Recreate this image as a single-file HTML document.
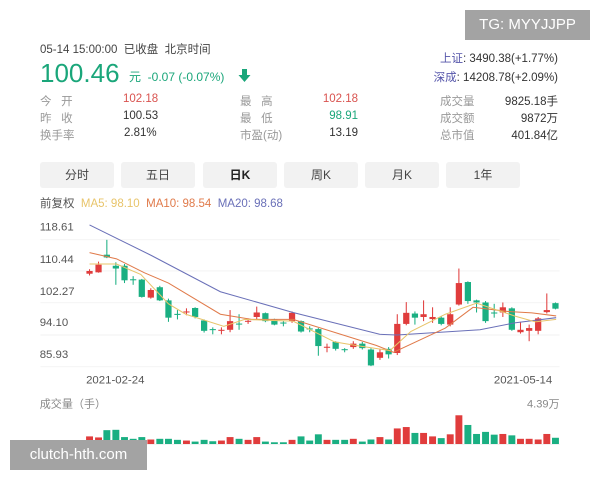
<!DOCTYPE html>
<html><head><meta charset="utf-8"><style>
body{margin:0;width:600px;height:480px;background:#fff;font-family:"Liberation Sans","Noto Sans CJK SC",sans-serif;position:relative;overflow:hidden;color:#333}
.a{position:absolute;white-space:nowrap;font-size:11.5px}
.g{color:#999}.r{color:#d9534f}.gr{color:#1aa67a}
.tab{position:absolute;top:162px;width:74px;height:26px;background:#f2f2f2;border-radius:3px;text-align:center;line-height:26px;font-size:12px;color:#444}
</style></head><body>
<div class="a" style="left:465px;top:10px;width:125px;height:30px;background:#a3a3a3;color:#fff;font-size:15px;line-height:30px;text-align:center">TG: MYYJJPP</div>
<div class="a" style="left:40px;top:41px;font-size:11.5px;color:#444">05-14 15:00:00 &nbsp;已收盘 &nbsp;北京时间</div>
<div class="a gr" style="left:40px;top:58px;font-size:26px">100.46</div>
<div class="a gr" style="left:129px;top:68px;font-size:12px">元 &nbsp;-0.07 (-0.07%)</div>
<svg style="position:absolute;left:238px;top:68px" width="13" height="15"><path d="M4 1h5v6h3.5L6.5 14 0.5 7H4z" fill="#1aa67a"/></svg>
<div class="a g" style="left:40px;top:93px">今 &nbsp; 开</div><div class="a r" style="left:123px;top:93px">102.18</div>
<div class="a g" style="left:40px;top:110px">昨 &nbsp; 收</div><div class="a" style="left:123px;top:110px">100.53</div>
<div class="a g" style="left:40px;top:127px">换手率</div><div class="a" style="left:124px;top:127px">2.81%</div>
<div class="a g" style="left:240px;top:93px">最 &nbsp; 高</div><div class="a r" style="left:300px;top:93px;width:58px;text-align:right">102.18</div>
<div class="a g" style="left:240px;top:110px">最 &nbsp; 低</div><div class="a gr" style="left:300px;top:110px;width:58px;text-align:right">98.91</div>
<div class="a g" style="left:240px;top:127px">市盈(动)</div><div class="a" style="left:300px;top:127px;width:58px;text-align:right">13.19</div>
<div class="a" style="left:400px;top:50px;width:158px;text-align:right"><span style="color:#55a">上证</span>: 3490.38(+1.77%)</div>
<div class="a" style="left:400px;top:69px;width:158px;text-align:right"><span style="color:#55a">深成</span>: 14208.78(+2.09%)</div>
<div class="a g" style="left:440px;top:93px">成交量</div><div class="a" style="left:480px;top:93px;width:78px;text-align:right">9825.18手</div>
<div class="a g" style="left:440px;top:110px">成交额</div><div class="a" style="left:480px;top:110px;width:78px;text-align:right">9872万</div>
<div class="a g" style="left:440px;top:127px">总市值</div><div class="a" style="left:480px;top:127px;width:78px;text-align:right">401.84亿</div>
<div class="tab" style="left:40px">分时</div><div class="tab" style="left:121px">五日</div><div class="tab" style="left:203px;font-weight:bold;color:#222">日K</div><div class="tab" style="left:284px">周K</div><div class="tab" style="left:365px">月K</div><div class="tab" style="left:446px">1年</div>
<div class="a" style="left:40px;top:195px;font-size:11.5px"><span style="color:#555">前复权</span> &nbsp;<span style="color:#e8c46a">MA5: 98.10</span> &nbsp;<span style="color:#e07a4a">MA10: 98.54</span> &nbsp;<span style="color:#6a70b8">MA20: 98.68</span></div>
<svg style="position:absolute;left:30px;top:200px" width="540" height="280" viewBox="0 0 1560 809" preserveAspectRatio="none">
<g stroke="#eee" stroke-width="2"><line x1="30" y1="115" x2="1530" y2="115"/><line x1="30" y1="205" x2="1530" y2="205"/><line x1="30" y1="297" x2="1530" y2="297"/><line x1="30" y1="390" x2="1530" y2="390"/><line x1="30" y1="482" x2="1530" y2="482"/><line x1="30" y1="706" x2="1530" y2="706"/></g>
<g font-size="33" fill="#555" font-family="Liberation Sans,sans-serif"><text x="28" y="88">118.61</text><text x="28" y="182">110.44</text><text x="28" y="274">102.27</text><text x="28" y="364">94.10</text><text x="28" y="456">85.93</text><text x="162" y="530">2021-02-24</text><text x="1340" y="530">2021-05-14</text></g>
<text x="28" y="600" font-size="32" fill="#888" font-family="Liberation Sans,Noto Sans CJK SC,sans-serif">成交量（手）</text>
<text x="1530" y="600" font-size="32" fill="#888" text-anchor="end" font-family="Liberation Sans,Noto Sans CJK SC,sans-serif">4.39万</text>
<g id="c"></g>
<polyline fill="none" stroke="#6a70b8" stroke-width="3" points="172,72 350,160 550,265 760,325 1010,388 1060,390 1300,375 1400,355 1520,340"/>
<polyline fill="none" stroke="#e07a4a" stroke-width="3" points="172,152 250,170 330,210 400,240 550,330 640,345 760,345 1000,420 1050,440 1200,370 1280,310 1380,322 1450,326 1520,335"/>
<polyline fill="none" stroke="#e8c46a" stroke-width="3" points="172,185 250,185 320,215 400,300 450,330 560,365 620,345 700,348 760,350 880,410 940,420 1040,435 1100,380 1200,330 1290,298 1400,335 1460,352 1520,345"/>
</svg>
<div class="a" style="left:10px;top:440px;width:137px;height:30px;background:#a3a3a3;color:#fff;font-size:15px;line-height:30px;text-align:center">clutch-hth.com</div>
<script>
var d=[[172,'r',205,213,200,218],[198,'r',187,209,178,210],[222,'g',158,166,115,168],[248,'g',190,198,180,245],[273,'g',190,232,185,240],[298,'g',229,231,220,245],[323,'g',230,280,228,282],[349,'r',260,282,255,285],[375,'g',252,290,248,292],[400,'g',290,340,285,352],[426,'g',329,331,318,345],[452,'r',322,324,313,333],[477,'g',312,338,310,342],[503,'g',348,378,345,383],[528,'g',373,375,368,388],[553,'r',375,377,368,388],[578,'r',350,375,318,382],[604,'g',357,359,330,375],[630,'r',349,351,342,358],[655,'r',325,338,308,345],[680,'g',327,350,325,353],[706,'g',346,360,343,362],[732,'g',354,356,348,365],[757,'r',326,350,322,355],[783,'g',350,380,348,383],[808,'g',371,373,365,382],[833,'g',373,422,370,450],[858,'r',424,426,415,440],[883,'g',410,430,408,435],[909,'g',431,434,428,440],[934,'r',415,425,408,430],[960,'g',415,428,410,432],[985,'g',432,478,428,480],[1011,'r',440,456,432,462],[1036,'g',430,446,425,458],[1061,'r',358,442,330,448],[1087,'r',326,358,295,362],[1112,'g',328,340,322,360],[1137,'r',330,338,290,350],[1163,'r',338,344,310,355],[1188,'g',340,358,335,362],[1214,'r',330,360,310,365],[1239,'r',240,302,198,305],[1265,'g',237,292,235,300],[1290,'g',290,296,288,325],[1316,'g',296,350,292,355],[1341,'g',325,327,300,340],[1366,'r',310,325,296,338],[1392,'g',313,375,310,378],[1417,'r',375,382,352,386],[1442,'r',370,378,360,408],[1468,'r',342,378,338,388],[1493,'r',318,324,270,328],[1518,'g',298,314,296,316]];
var v=[683,686,665,664,685,690,685,692,690,690,693,695,698,693,697,695,685,690,693,685,698,700,700,693,683,695,677,693,693,693,690,698,692,685,692,660,656,673,673,683,688,677,622,650,676,670,678,676,680,690,690,692,676,687];
var s='';d.forEach(function(e,i){var c=e[1]=='r'?'#e03c3c':'#1aaf82';s+='<line x1="'+e[0]+'" x2="'+e[0]+'" y1="'+e[4]+'" y2="'+e[5]+'" stroke="'+c+'" stroke-width="3"/><rect x="'+(e[0]-9)+'" y="'+e[2]+'" width="18" height="'+Math.max(3,e[3]-e[2])+'" fill="'+c+'"/><rect x="'+(e[0]-10)+'" y="'+v[i]+'" width="20" height="'+(705-v[i])+'" fill="'+c+'"/>';});
document.getElementById('c').innerHTML=s;
</script>
</body></html>
